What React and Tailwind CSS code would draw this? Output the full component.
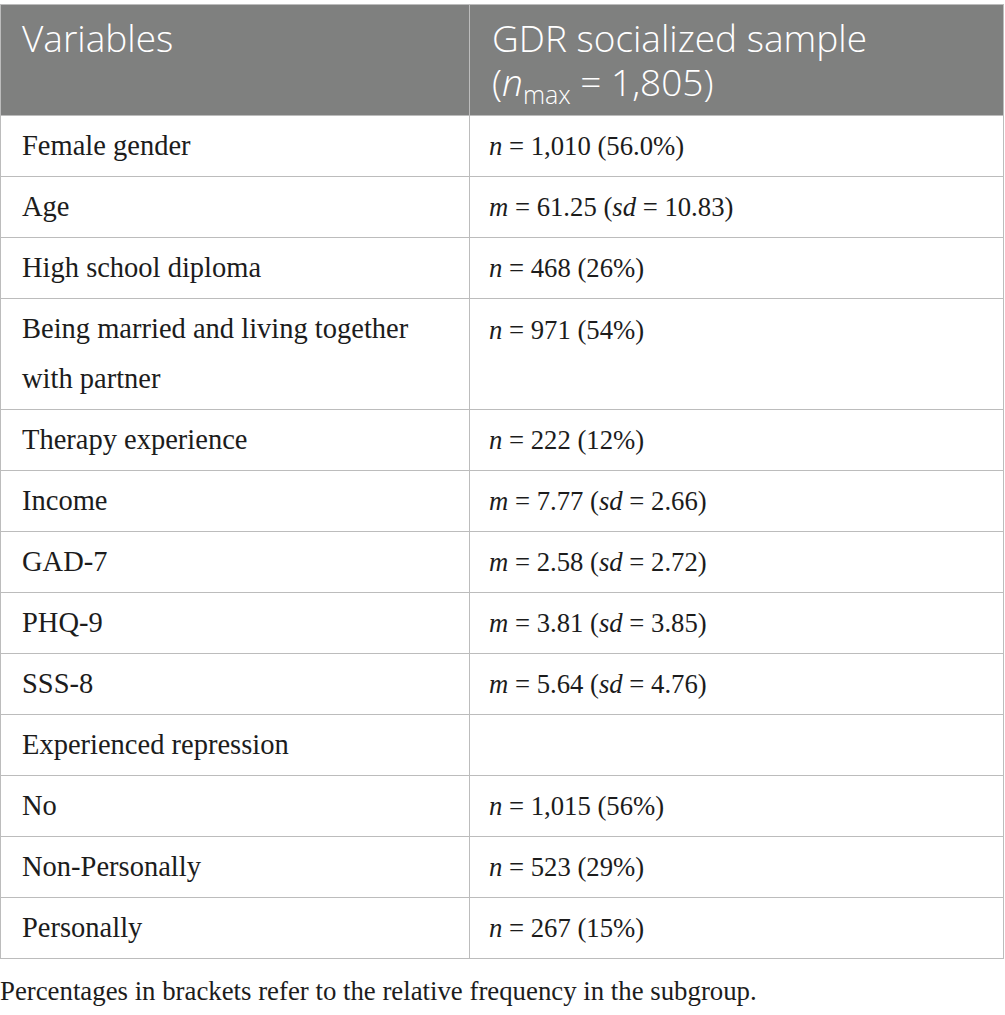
const rows = [
  { label: 'Female gender', value: <><i>n</i> = 1,010 (56.0%)</> },
  { label: 'Age', value: <><i>m</i> = 61.25 (<i>sd</i> = 10.83)</> },
  { label: 'High school diploma', value: <><i>n</i> = 468 (26%)</> },
  { label: <>Being married and living together<br />with partner</>, value: <><i>n</i> = 971 (54%)</>, top: true },
  { label: 'Therapy experience', value: <><i>n</i> = 222 (12%)</> },
  { label: 'Income', value: <><i>m</i> = 7.77 (<i>sd</i> = 2.66)</> },
  { label: 'GAD-7', value: <><i>m</i> = 2.58 (<i>sd</i> = 2.72)</> },
  { label: 'PHQ-9', value: <><i>m</i> = 3.81 (<i>sd</i> = 3.85)</> },
  { label: 'SSS-8', value: <><i>m</i> = 5.64 (<i>sd</i> = 4.76)</> },
  { label: 'Experienced repression', value: null },
  { label: 'No', value: <><i>n</i> = 1,015 (56%)</> },
  { label: 'Non-Personally', value: <><i>n</i> = 523 (29%)</> },
  { label: 'Personally', value: <><i>n</i> = 267 (15%)</> },
]

export default function App() {
  return (
    <div className="w-[1005px] bg-white pt-[4px]">
      <table className="w-[1004px] border-collapse table-fixed">
        <colgroup>
          <col className="w-[469px]" />
          <col />
        </colgroup>
        <thead>
          <tr className="bg-[#7f807f] text-white font-['Open_Sans',sans-serif] font-light text-[37px] leading-[44px]">
            <th className="border border-[#bcbcbc] text-left align-top font-light pl-[21px] pt-[11px] pb-[11px]">Variables</th>
            <th className="border border-[#bcbcbc] text-left align-top font-light pl-[22px] pt-[11px] pb-[11px]">
              <div>GDR socialized sample</div>
              <div>
                (<i>n</i><span className="relative top-[8px] text-[25px] leading-none">max</span> = 1,805)
              </div>
            </th>
          </tr>
        </thead>
        <tbody className="font-['Liberation_Serif',serif] text-[#1c1c1c] leading-[50px]">
          {rows.map((r, i) => (
            <tr key={i}>
              <td className="border border-[#bcbcbc] pl-[21px] py-[5px] align-middle text-[28.5px]">{r.label}</td>
              <td className={`border border-[#bcbcbc] pl-[19px] py-[5px] text-[26.7px] ${r.top ? 'align-top pt-[6px]' : 'align-middle'}`}>
                {r.value ?? '\u00a0'}
              </td>
            </tr>
          ))}
        </tbody>
      </table>
      <p className="mt-[17px] font-['Liberation_Serif',serif] text-[26.8px] text-[#1c1c1c] leading-[30px]">
        Percentages in brackets refer to the relative frequency in the subgroup.
      </p>
    </div>
  )
}
